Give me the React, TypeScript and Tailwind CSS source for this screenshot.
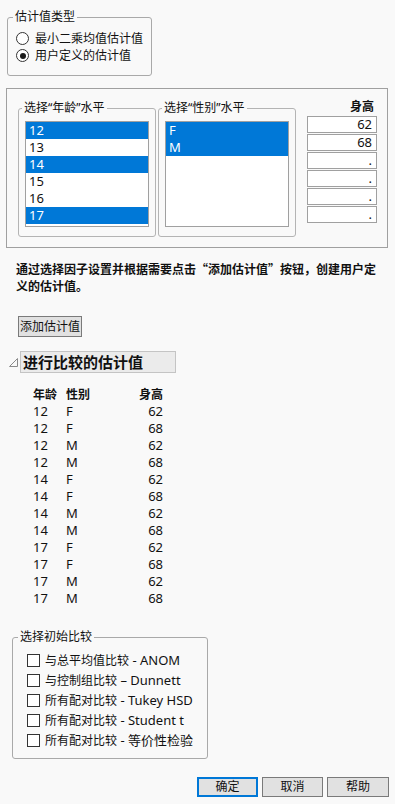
import React from "react";

const F = "font-['Noto_Sans','Noto_Sans_CJK_SC',sans-serif]";

function Radio({ checked, label }: { checked?: boolean; label: string }) {
  return (
    <div className="flex items-center h-[17px] pl-[8px] gap-[6px]">
      <span className="w-[13px] h-[13px] rounded-full border border-[#333] bg-white flex items-center justify-center">
        {checked && <span className="w-[6px] h-[6px] rounded-full bg-[#1a1a1a]" />}
      </span>
      <span className="text-[12px] leading-[16px] text-[#111]">{label}</span>
    </div>
  );
}

function ListBox({ items, selected }: { items: string[]; selected: boolean[] }) {
  return (
    <div className="mx-[6px] mt-[5px] h-[106px] border border-[#a0a0a0] bg-white">
      {items.map((it, i) => (
        <div
          key={i}
          className={`h-[17px] leading-[17px] pl-[3px] text-[13px] ${selected[i] ? "bg-[#0078d7] text-white" : "text-[#111]"}`}
        >
          {it}
        </div>
      ))}
    </div>
  );
}

const rows: [string, string, string][] = [
  ["12", "F", "62"],
  ["12", "F", "68"],
  ["12", "M", "62"],
  ["12", "M", "68"],
  ["14", "F", "62"],
  ["14", "F", "68"],
  ["14", "M", "62"],
  ["14", "M", "68"],
  ["17", "F", "62"],
  ["17", "F", "68"],
  ["17", "M", "62"],
  ["17", "M", "68"],
];

const checks: [string, string][] = [
  ["与总平均值比较", " - ANOM"],
  ["与控制组比较", " – Dunnett"],
  ["所有配对比较", " - Tukey HSD"],
  ["所有配对比较", " - Student t"],
  ["所有配对比较", " - 等价性检验"],
];

export default function App() {
  return (
    <div className={`w-[395px] h-[804px] bg-[#f9f9f9] overflow-hidden ${F} text-[#111]`}>
      {/* Fieldset 1 */}
      <fieldset className="ml-[7px] mt-[9px] w-[145px] h-[67px] border border-[#a9a9a9] rounded-[3px]">
        <legend className="ml-[5px] px-[2px] text-[12px] leading-[16px]">估计值类型</legend>
        <div className="pt-[5px]">
          <Radio label="最小二乘均值估计值" />
          <Radio checked label="用户定义的估计值" />
        </div>
      </fieldset>

      {/* Panel */}
      <div className="ml-[6px] mt-[12px] w-[382px] h-[160px] border border-[#a0a0a0] flex pl-[11px]">
        <fieldset className="mt-[11px] w-[138px] h-[137px] border border-[#b4b4b4] rounded-[3px]">
          <legend className="ml-[3px] px-[2px] text-[12px] leading-[16px]">选择“年龄”水平</legend>
          <ListBox
            items={["12", "13", "14", "15", "16", "17"]}
            selected={[true, false, true, false, false, true]}
          />
        </fieldset>
        <fieldset className="ml-[2px] mt-[11px] w-[138px] h-[137px] border border-[#b4b4b4] rounded-[3px]">
          <legend className="ml-[3px] px-[2px] text-[12px] leading-[16px]">选择“性别”水平</legend>
          <ListBox items={["F", "M"]} selected={[true, true]} />
        </fieldset>
        <div className="ml-[11px] mt-[10px] w-[70px] flex flex-col">
          <div className="text-right pr-[3px] text-[12px] leading-[16px] font-bold">身高</div>
          <div className="mt-[1px] flex flex-col gap-[1px]">
            {["62", "68", ".", ".", ".", "."].map((v, i) => (
              <div
                key={i}
                className="h-[17px] border border-[#a0a0a0] bg-white text-right pr-[4px] text-[13px] leading-[15px]"
              >
                {v}
              </div>
            ))}
          </div>
        </div>
      </div>

      {/* Paragraph */}
      <div className="ml-[16px] mt-[12px] text-[12px] leading-[17px] font-bold whitespace-nowrap">
        <div>
          通过选择因子设置并根据需要点击<span className="font-['Noto_Sans_CJK_SC',sans-serif]">“添加估计值”</span>按钮，创建用户定
        </div>
        <div>义的估计值。</div>
      </div>

      {/* Add button */}
      <div className="ml-[18px] mt-[21px] w-[64px] h-[21px] bg-[#e1e1e1] border border-[#7a7a7a] flex items-center justify-center text-[12px]">
        添加估计值
      </div>

      {/* Outline header */}
      <div className="mt-[14px] flex items-center h-[22px]">
        <svg className="ml-[9px]" width="9" height="9" viewBox="0 0 9 9">
          <polygon points="8.5,0.5 8.5,8.5 0.5,8.5" fill="none" stroke="#8a8a8a" strokeWidth="1" />
        </svg>
        <div className="ml-[2px] w-[156px] h-[22px] bg-[#ebebeb] border border-[#c4c4c4] pl-[2px] text-[15px] leading-[20px] font-bold">
          进行比较的估计值
        </div>
      </div>

      {/* Table */}
      <div className="mt-[13px] ml-[33px] w-[130px] text-[12px]">
        <div className="flex h-[17px] leading-[17px] font-bold">
          <span className="w-[33px]">年龄</span>
          <span className="w-[40px]">性别</span>
          <span className="flex-1 text-right">身高</span>
        </div>
        {rows.map((r, i) => (
          <div key={i} className="flex h-[17px] leading-[17px] text-[13px]">
            <span className="w-[33px]">{r[0]}</span>
            <span className="w-[40px]">{r[1]}</span>
            <span className="flex-1 text-right">{r[2]}</span>
          </div>
        ))}
      </div>

      {/* Fieldset 3 */}
      <fieldset className="ml-[12px] mt-[22px] w-[196px] h-[130px] border border-[#a9a9a9] rounded-[3px]">
        <legend className="ml-[5px] px-[2px] text-[12px] leading-[16px]">选择初始比较</legend>
        <div className="pl-[14px] pt-[5px] flex flex-col">
          {checks.map((c, i) => (
            <div key={i} className="flex items-center h-[20px] gap-[5px]">
              <span className="w-[13px] h-[13px] border border-[#333] bg-white" />
              <span className="text-[12px] leading-[16px] whitespace-pre">
                {c[0]}
                <span className="text-[13px]">{c[1]}</span>
              </span>
            </div>
          ))}
        </div>
      </fieldset>

      {/* Bottom buttons */}
      <div className="mt-[18px] flex justify-end gap-[4px] pr-[6px]">
        <div className="w-[61px] h-[20px] bg-[#e1e1e1] border-2 border-[#0078d7] flex items-center justify-center text-[12px]">
          确定
        </div>
        <div className="w-[61px] h-[20px] bg-[#e1e1e1] border border-[#7a7a7a] flex items-center justify-center text-[12px]">
          取消
        </div>
        <div className="w-[62px] h-[20px] bg-[#e1e1e1] border border-[#7a7a7a] flex items-center justify-center text-[12px]">
          帮助
        </div>
      </div>
    </div>
  );
}
